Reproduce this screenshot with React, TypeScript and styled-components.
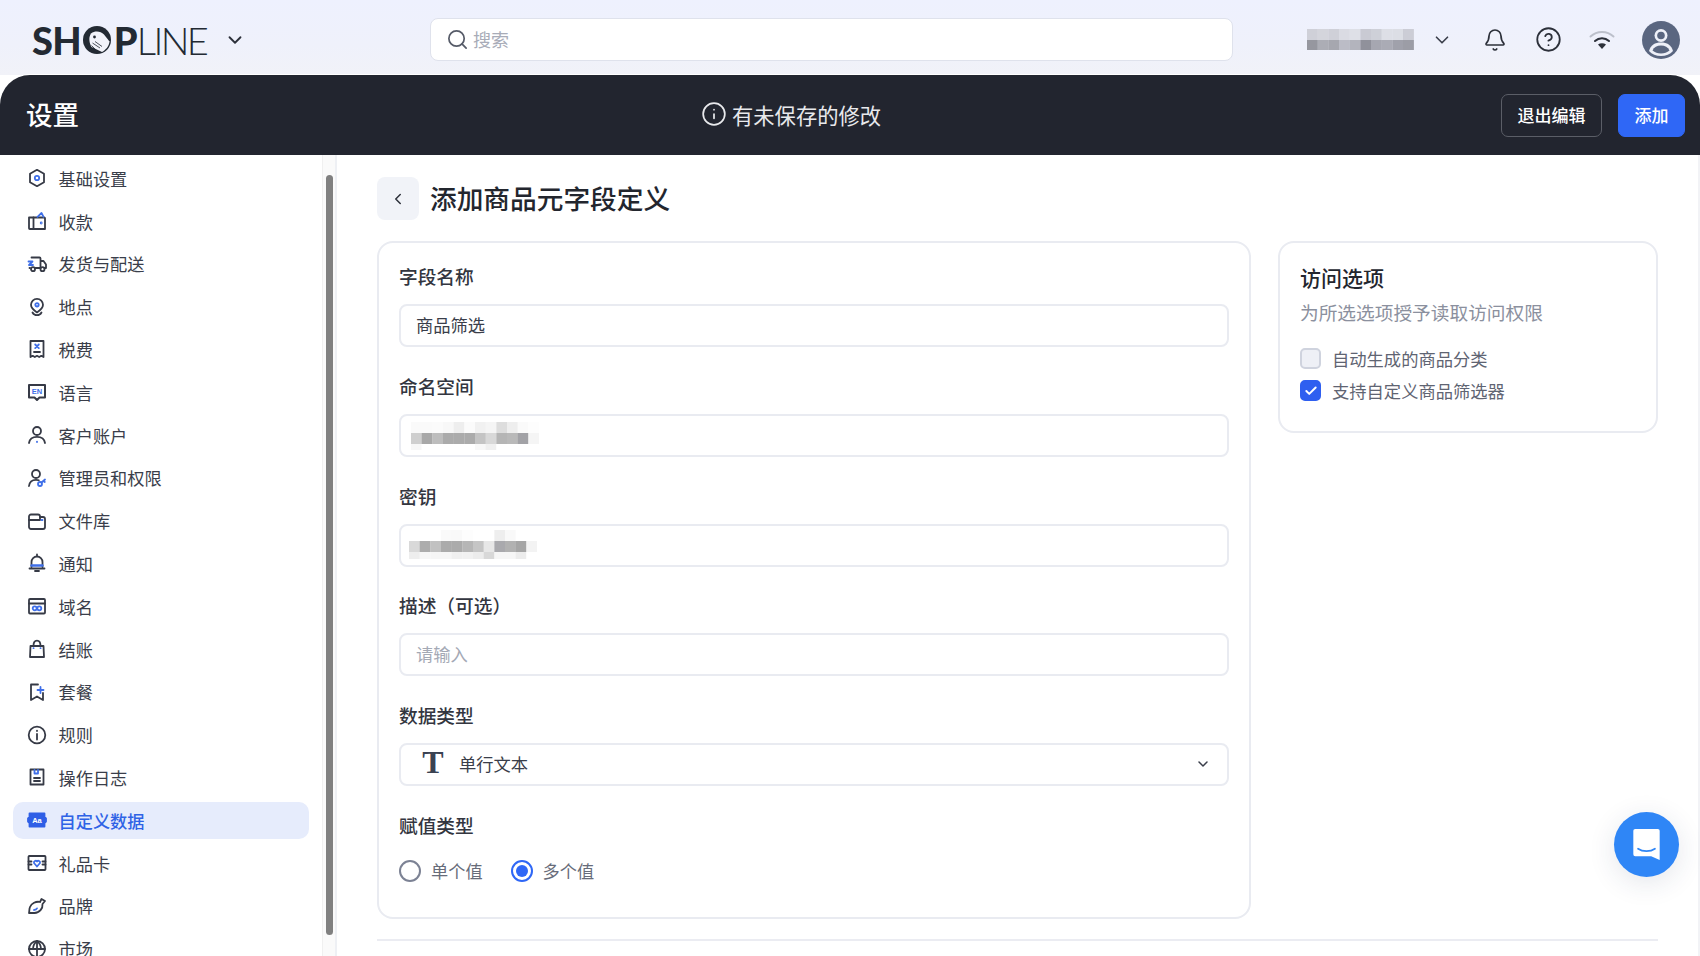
import React from "react";
import styled, { createGlobalStyle } from "styled-components";
import { Bell, Check, ChevronDown, ChevronLeft, CircleHelp, Info, Search } from "lucide-react";

const CJK = `"Noto Sans CJK SC", "Noto Sans", sans-serif`;
const INK = "#3a3e4a";
const BLUE = "#3f6fe8";

const Global = createGlobalStyle`
  html, body { margin: 0; height: 100%; background: #fff; overflow: hidden; }
  * { box-sizing: border-box; }
  body { font-family: ${CJK}; color: ${INK}; }
`;

const Page = styled.div`
  position: relative;
  width: 1700px;
  height: 956px;
  display: flex;
  flex-direction: column;
  overflow: hidden;
  background: #fff;
`;

const Top = styled.header`
  height: 75px;
  flex: none;
  display: flex;
  align-items: center;
  padding-top: 4px;
  background: linear-gradient(180deg, #eef1fe 0%, #eff1fb 60%, #f1f2f8 100%);
`;

const LogoWrap = styled.div`
  width: 430px;
  flex: none;
  padding-left: 32px;
  display: flex;
  align-items: center;
`;

const Logo = styled.div`
  display: flex;
  align-items: center;
  font-family: Lato, "Noto Sans", sans-serif;
  font-size: 38px;
  line-height: 1;
  color: #232a33;
  width: 192px;
`;

const LogoBold = styled.span`
  font-weight: 900;
  letter-spacing: -0.8px;
`;

const LogoThin = styled.span`
  font-weight: 300;
  letter-spacing: -2.6px;
`;

const LogoMark = styled.svg`
  width: 28px;
  height: 28px;
  margin: 0 3px 0 2px;
  flex: none;
`;

const SearchBox = styled.div`
  width: 803px;
  height: 43px;
  flex: none;
  display: flex;
  align-items: center;
  gap: 4px;
  padding: 0 0 1px 15px;
  background: #fff;
  border: 1px solid #dfe2ec;
  border-radius: 8px;
  color: #a8acb8;
  font-size: 18px;
`;

const SearchIcon = styled(Search)`
  margin-top: 1px;
`;

const TopRight = styled.div`
  display: flex;
  align-items: center;
  margin-left: 74px;
`;

const Account = styled.div`
  display: flex;
  align-items: center;
  width: 176px;
  gap: 17px;
  color: ${INK};
`;

const TopIcon = styled.div<{ $w: number; $ml?: number }>`
  width: ${(p) => p.$w}px;
  margin-left: ${(p) => p.$ml ?? 0}px;
  display: flex;
  justify-content: center;
  color: #2c303a;
`;

const Bar = styled.div`
  height: 80px;
  flex: none;
  display: flex;
  align-items: center;
  background: #22252f;
  border-radius: 30px 30px 0 0;
  box-shadow: 0 -1px 0 #fff;
  padding: 0 15px 0 26px;
  color: #fff;
`;

const BarTitle = styled.div`
  width: 675px;
  flex: none;
  font-size: 26.5px;
  font-weight: 500;
  padding-bottom: 3px;
`;

const Unsaved = styled.div`
  display: flex;
  align-items: center;
  gap: 5px;
  font-size: 21.3px;
  color: #e8e9ec;
  padding-bottom: 2px;
`;

const BarActions = styled.div`
  margin-left: auto;
  display: flex;
  gap: 16px;
`;

const BarButton = styled.button<{ $primary?: boolean }>`
  height: 43px;
  padding: 0 0 2px;
  width: ${(p) => (p.$primary ? 67 : 101)}px;
  border-radius: 7px;
  font: 500 17px ${CJK};
  color: #fff;
  background: ${(p) => (p.$primary ? "#2f67f6" : "transparent")};
  border: 1px solid ${(p) => (p.$primary ? "#2f67f6" : "#5b5e67")};
`;

const Body = styled.div`
  flex: 1;
  min-height: 0;
  display: flex;
`;

const Side = styled.aside`
  width: 337px;
  flex: none;
  display: flex;
  border-right: 2px solid #eef0f4;
  overflow: hidden;
`;

const Nav = styled.nav`
  width: 322px;
  flex: none;
  padding: 5px 13px 0;
  display: flex;
  flex-direction: column;
  gap: 5.8px;
`;

const NavItem = styled.div<{ $active?: boolean }>`
  height: 37px;
  flex: none;
  display: flex;
  align-items: center;
  gap: 11.5px;
  padding: 0 0 0.5px 14px;
  border-radius: 10px;
  font-size: 17.2px;
  color: ${(p) => (p.$active ? "#2f63e6" : INK)};
  background: ${(p) => (p.$active ? "#e6ecfc" : "transparent")};
  font-weight: ${(p) => (p.$active ? 500 : 400)};
`;

const Rail = styled.div`
  width: 13px;
  flex: none;
  padding: 20px 2px 0 3px;
  background: #fafafa;
  border-left: 1px solid #f0f0f0;
`;

const Thumb = styled.div`
  height: 760px;
  border-radius: 4px;
  background: #808080;
`;

const Main = styled.main`
  flex: 1;
  min-width: 0;
  padding: 22px 0 0 40px;
  display: flex;
  flex-direction: column;
  border-right: 2px solid #f2f3f6;
`;

const Head = styled.div`
  display: flex;
  align-items: center;
  gap: 11px;
  height: 43px;
  flex: none;
`;

const Back = styled.div`
  width: 42px;
  height: 43px;
  border-radius: 8px;
  background: #f1f3f8;
  display: flex;
  align-items: center;
  justify-content: center;
  color: #2c303a;
`;

const Title = styled.h1`
  margin: 0;
  padding-bottom: 2px;
  font-size: 26.7px;
  font-weight: 500;
  color: #23262e;
`;

const Columns = styled.div`
  margin-top: 21px;
  display: grid;
  grid-template-columns: 874px 380px;
  gap: 27px;
  align-items: start;
  flex: none;
`;

const Card = styled.section`
  border: 2px solid #e9ebf1;
  border-radius: 16px;
  background: #fff;
`;

const FormCard = styled(Card)`
  height: 678px;
  padding: 20px 20px 0;
  display: flex;
  flex-direction: column;
  gap: 25.8px;
`;

const Field = styled.div`
  display: flex;
  flex-direction: column;
  gap: 15px;
`;

const Label = styled.div`
  height: 26px;
  line-height: 26px;
  font-size: 18.7px;
  font-weight: 500;
  color: #33363f;
`;

const InputBox = styled.div<{ $muted?: boolean }>`
  height: 43px;
  display: flex;
  align-items: center;
  padding: 0 0 2px 15px;
  border: 2px solid #e9ebf1;
  border-radius: 8px;
  font-size: 17.3px;
  color: ${(p) => (p.$muted ? "#a4a9b5" : INK)};
`;

const SelectBox = styled(InputBox)`
  padding: 0 16px 2px 20px;
  gap: 14px;
`;

const SelectText = styled.span`
  flex: 1;
`;

const TypeGlyph = styled.span`
  font: 700 32px/1 "Liberation Serif", serif;
  color: #3a4252;
  width: 24px;
  text-align: center;
  margin-top: -3px;
`;

const MosaicSvg = styled.svg<{ $ml?: number; $mt?: number }>`
  display: block;
  flex: none;
  margin-left: ${(p) => p.$ml ?? 0}px;
  margin-top: ${(p) => p.$mt ?? 0}px;
  filter: blur(0.3px);
`;

const Radios = styled.div`
  height: 30px;
  margin-top: 3px;
  display: flex;
  align-items: center;
  gap: 28px;
`;

const RadioLabel = styled.div`
  display: flex;
  align-items: center;
  gap: 10px;
  font-size: 17.2px;
  color: #676c7a;
`;

const RadioDot = styled.span<{ $on?: boolean }>`
  width: 22px;
  height: 22px;
  border-radius: 50%;
  border: 2.5px solid ${(p) => (p.$on ? "#2f67f6" : "#7c8294")};
  display: flex;
  align-items: center;
  justify-content: center;
  &::after {
    content: "";
    width: 12px;
    height: 12px;
    border-radius: 50%;
    background: ${(p) => (p.$on ? "#2f67f6" : "transparent")};
  }
`;

const AccessCard = styled(Card)`
  height: 192px;
  padding: 19px 20px 0;
`;

const AccessTitle = styled.div`
  font-size: 21px;
  font-weight: 500;
  line-height: 30px;
  color: #23262e;
`;

const AccessSub = styled.div`
  margin-top: 5px;
  font-size: 18.7px;
  line-height: 30px;
  color: #8b909e;
`;

const Checks = styled.div`
  margin-top: 20px;
  display: flex;
  flex-direction: column;
  gap: 10.5px;
`;

const CheckRow = styled.div`
  display: flex;
  align-items: center;
  gap: 11px;
  font-size: 17.3px;
  color: #5f6472;
  height: 22px;
`;

const CheckBox = styled.span<{ $on?: boolean }>`
  width: 21px;
  height: 21px;
  border-radius: 5px;
  display: flex;
  align-items: center;
  justify-content: center;
  color: #fff;
  background: ${(p) => (p.$on ? "#2f5ff0" : "#eef0f6")};
  border: 2px solid ${(p) => (p.$on ? "#2f5ff0" : "#cfd3de")};
`;

const Divider = styled.div`
  width: 1281px;
  height: 2px;
  margin-top: 20px;
  flex: none;
  background: #ebecf2;
`;

const Chat = styled.div`
  position: absolute;
  left: 1614px;
  top: 811.5px;
  width: 65px;
  height: 65px;
  border-radius: 50%;
  background: #2f86f6;
  box-shadow: 0 6px 28px rgba(30, 50, 90, 0.12);
  display: flex;
  align-items: center;
  justify-content: center;
`;

const NavSvg = styled.svg`
  width: 20px;
  height: 20px;
  flex: none;
  fill: none;
  stroke: #363a46;
  stroke-width: 1.8;
  stroke-linecap: round;
  stroke-linejoin: round;
`;

const Accent = styled.g`
  stroke: ${BLUE};
`;

const IconLabel = styled.text`
  font: 700 7.5px "Liberation Sans", sans-serif;
  text-anchor: middle;
  stroke: none;
`;

type Row = string[];

function Mosaic({ rows, cell = 10.67, heights, ml, mt }: { rows: Row[]; cell?: number; heights: number[]; ml?: number; mt?: number }) {
  const w = rows[0].length * cell;
  const h = heights.reduce((a, b) => a + b, 0);
  let y = 0;
  return (
    <MosaicSvg width={w} height={h} viewBox={`0 0 ${w} ${h}`} $ml={ml} $mt={mt}>
      {rows.map((r, i) => {
        const top = y;
        y += heights[i];
        return r.map((c, j) => <rect key={`${i}-${j}`} x={j * cell} y={top} width={cell + 0.2} height={heights[i]} fill={`#${c}`} />);
      })}
    </MosaicSvg>
  );
}

const NS: Row[] = [
  ["fafafa", "fafafa", "fbfbfb", "f8f8f8", "eeeeee", "fbfbfb", "f1f1f1", "f5f5f5", "dddddd", "eeeeee", "fafafa", "fdfdfd"],
  ["cfcfcf", "a8a8a8", "bdbdbd", "ababab", "ababab", "ababab", "c4c4c4", "d8d8d8", "b5b5b5", "b9b9b9", "a2a2a6", "f5f5f5"],
  ["f7f7f7", "ffffff", "ffffff", "ffffff", "ffffff", "ffffff", "f8f8f8", "f0f0f0", "ffffff", "ffffff", "ffffff", "ffffff"],
];
const KEY: Row[] = [
  ["ffffff", "ffffff", "ffffff", "fafafa", "f9f9f9", "fdfdfd", "ffffff", "ffffff", "eeeeee", "f9f9f9", "ffffff", "ffffff"],
  ["d9d9d9", "acacac", "c1c1c1", "ababab", "ababab", "b6b6b6", "c5c5c5", "e7e7e7", "a9a9ad", "b1b1b1", "a5a5a5", "f3f3f3"],
  ["eeeeee", "f6f6f6", "f6f6f6", "f6f6f6", "f0f0f0", "f1f1f1", "ececec", "d8d8d8", "f6f6f6", "f6f6f6", "ececec", "ffffff"],
];
const ACC: Row[] = [
  ["cfd0d8", "d4d5dc", "cfd0d8", "dadbe3", "dee0e7", "c9cad3", "ced0d8", "dddfe6", "dcdee5", "cccdd6"],
  ["96979f", "acadb5", "a6a7af", "bbbcc6", "b3b4bd", "90919b", "a6a7b1", "aaabb5", "a0a1ab", "9c9da6"],
];

const icons: Record<string, React.ReactNode> = {
  hex: (<><path d="M10 1.800l7 4v8.400l-7 4-7-4V5.800z" /><Accent><circle cx="10" cy="10" r="2.200" /></Accent></>),
  wallet: (<><path d="M2 6.500h15.500a.8.8 0 0 1 .5.7V18H2.800a.8.8 0 0 1-.8-.8z" /><path d="M6.500 6.500V18" /><Accent><path d="M10.500 5.800L14.500 2l2 3.800" /><circle cx="14.200" cy="12" r=".5" /></Accent></>),
  truck: (<><path d="M4.500 3.500h8a1 1 0 0 1 1 1v9.500H8.500M13.500 7h3L19 10.500V14h-1.500" /><path d="M3 14H2.500" /><circle cx="6" cy="15.200" r="2" /><circle cx="15.500" cy="15.200" r="2" /><Accent><path d="M1.500 7.500h4L2 11h4" /></Accent></>),
  pin: (<><path d="M10 1.800a6 6 0 0 1 6 6c0 3-3 5.700-6 7.600-3-1.900-6-4.600-6-7.600a6 6 0 0 1 6-6z" /><path d="M5.500 15.500c1 1.800 2.500 2.700 4.500 2.700s3.500-.9 4.500-2.700" /><Accent><circle cx="10" cy="7.800" r="1.700" /></Accent></>),
  receipt: (<><path d="M3.500 2h13v16l-2.200-1.200-2.100 1.200-2.200-1.200-2.200 1.200-2.100-1.200-2.200 1.200z" /><Accent><path d="M8.200 5.500l3.600 3.600M11.800 5.500l-3.600 3.600" /></Accent><path d="M7 13h6" /></>),
  lang: (<><path d="M2 3h16v12.500h-5.500L10 18l-2.500-2.500H2z" strokeWidth="2" /><IconLabel x="10" y="12" fill={BLUE}>EN</IconLabel></>),
  person: (<><circle cx="10" cy="6" r="4" /><path d="M2 18c.6-4 3.600-6.200 8-6.200s7.400 2.200 8 6.200" /><Accent><path d="M10 16.600v.4" /></Accent></>),
  admin: (<><circle cx="9" cy="6" r="4" /><path d="M2 18c.5-4 3-6.200 7-6.200 1 0 2 .1 2.800.5" /><Accent><circle cx="13" cy="16" r="2" /><path d="M14.500 14.500l3.500-3M16.500 13l1.300 1" /></Accent></>),
  folder: (<><path d="M2 5.500a2 2 0 0 1 2-2h7a2 2 0 0 1 2 2V6h3a2 2 0 0 1 2 2v8a2 2 0 0 1-2 2H4a2 2 0 0 1-2-2z" /><path d="M2 9h11V6" /><Accent><path d="M14.500 9h1" /></Accent></>),
  bell: (<><path d="M10 1.500v1.600M4.500 14V9a5.500 5.500 0 0 1 11 0v5" /><path d="M2.500 15.500h15M8 18h4" /><Accent><path d="M4.500 12.500h11" strokeWidth="2.400" /></Accent></>),
  domain: (<><rect x="2" y="3" width="16" height="14.500" rx="1" /><path d="M2 7.500h16" /><Accent><circle cx="7.700" cy="12.300" r="2" /><circle cx="12.300" cy="12.300" r="2" /></Accent></>),
  bag: (<><path d="M3.500 7h13l.5 11H3z" /><path d="M6.500 7c0-3.500 1-5.300 3.500-5.300S13.500 3.500 13.500 7" /><Accent><path d="M6.500 9.200h.1M13.500 9.200h.1" /></Accent></>),
  plan: (<><path d="M16 11v7l-6-3.500L4 18V2.500h7" /><Accent><path d="M13.500 5v6M10.500 8h6" /></Accent></>),
  info: (<><circle cx="10" cy="10" r="8.300" /><path d="M10 9v5.500M10 5.600v.4" /></>),
  log: (<><path d="M3.500 2.500h13v15h-13z" /><path d="M7 11h6M7 14h6" /><Accent><path d="M7.500 3v3.500h3.500V3" /></Accent></>),
  data: (<><path d="M2.500 3.500h15V7l1.500 1.500v3L17.500 13v3.500h-15V13L1 11.500v-3L2.500 7z" fill="#2f5fe6" stroke="#2f5fe6" /><IconLabel x="10" y="12.500" fill="#fff">Aa</IconLabel></>),
  gift: (<><rect x="1.500" y="3" width="17" height="14" rx=".8" /><path d="M1.500 8.500h3M15.500 8.500h3M1.500 11.500h3M15.500 11.500h3" /><Accent><path d="M10 13.500L7 10a1.700 1.700 0 0 1 3-1.500 1.700 1.700 0 0 1 3 1.500z" /></Accent></>),
  brand: (<><path d="M13 6l1.500-3 3.500 2-2.500 3c.5 4.500-3 9-8 9H2c.5-1.500 0-3.500 1-6 1.500-3.500 6-6 10-5z" /><Accent><path d="M7 14c1.500 0 2.500-.6 3-1.600" /></Accent></>),
  globe: (<><circle cx="10" cy="10" r="8" /><path d="M2 10h16M10 2v16M10 2c-3 2.500-4 5-4 8M10 2c3 2.500 4 5 4 8" /></>),
};

const NAV: [string, string][] = [
  ["hex", "基础设置"], ["wallet", "收款"], ["truck", "发货与配送"], ["pin", "地点"], ["receipt", "税费"],
  ["lang", "语言"], ["person", "客户账户"], ["admin", "管理员和权限"], ["folder", "文件库"], ["bell", "通知"],
  ["domain", "域名"], ["bag", "结账"], ["plan", "套餐"], ["info", "规则"], ["log", "操作日志"],
  ["data", "自定义数据"], ["gift", "礼品卡"], ["brand", "品牌"], ["globe", "市场"],
];

export default function App() {
  return (
    <Page>
      <Global />
      <Top>
        <LogoWrap>
          <Logo>
            <LogoBold>SH</LogoBold>
            <LogoMark viewBox="0 0 28 28">
              <circle cx="14" cy="14" r="14" fill="#232a33" />
              <path d="M8 7.500c4-3 9.500-2.500 13 1l5.500 7c-.5 5-4 8.500-7.500 10.500L8.500 21C6 16.500 5.500 11 8 7.500z" fill="#f2f3fa" />
              <circle cx="11.500" cy="11" r="1.400" fill="#232a33" />
              <path d="M9.500 17l7.500 5M8.500 19.500l5 5M12 15.500l7 5" stroke="#232a33" strokeWidth=".8" />
            </LogoMark>
            <LogoBold>P</LogoBold>
            <LogoThin>LINE</LogoThin>
          </Logo>
          <ChevronDown size={22} strokeWidth={2} color="#2c303a" />
        </LogoWrap>
        <SearchBox>
          <SearchIcon size={23} color="#565b68" strokeWidth={1.8} />
          搜索
        </SearchBox>
        <TopRight>
          <Account>
            <Mosaic rows={ACC} heights={[11, 10]} />
            <ChevronDown size={22} strokeWidth={1.8} color="#3a3e4a" />
          </Account>
          <TopIcon $w={24}><Bell size={26} strokeWidth={1.7} /></TopIcon>
          <TopIcon $w={82}><CircleHelp size={27} strokeWidth={1.6} /></TopIcon>
          <TopIcon $w={26}>
            <svg width="26" height="22" viewBox="0 0 26 22" fill="none" strokeLinecap="round">
              <path d="M1.500 7.500C8 1.500 18 1.500 24.500 7.500" stroke="#bcc0cb" strokeWidth="2" />
              <path d="M6 12c4-3.700 10-3.700 14 0" stroke="#2c303a" strokeWidth="2" />
              <path d="M13 20l-4-4.500c2.300-1.700 5.700-1.700 8 0z" fill="#2c303a" />
            </svg>
          </TopIcon>
          <TopIcon $w={38} $ml={27}>
            <svg width="38" height="38" viewBox="0 0 38 38">
              <circle cx="19" cy="19" r="19" fill="#5a6680" />
              <circle cx="19" cy="14.500" r="6.500" fill="#eef0f8" />
              <path d="M7 30c1.500-6 6-8.500 12-8.500S29.500 24 31 30c-3 3.500-7 5-12 5S10 33.500 7 30z" fill="#eef0f8" />
              <circle cx="19" cy="14.500" r="3.800" fill="#5a6680" />
              <path d="M10.500 29.500c1.500-3.500 4.500-5 8.500-5s7 1.500 8.500 5c-2.500 2-5 3-8.500 3s-6-1-8.500-3z" fill="#5a6680" />
            </svg>
          </TopIcon>
        </TopRight>
      </Top>

      <Bar>
        <BarTitle>设置</BarTitle>
        <Unsaved><Info size={26} strokeWidth={1.6} />有未保存的修改</Unsaved>
        <BarActions>
          <BarButton>退出编辑</BarButton>
          <BarButton $primary>添加</BarButton>
        </BarActions>
      </Bar>

      <Body>
        <Side>
          <Nav>
            {NAV.map(([icon, label]) => (
              <NavItem key={label} $active={icon === "data"}>
                <NavSvg viewBox="0 0 20 20">{icons[icon]}</NavSvg>
                {label}
              </NavItem>
            ))}
          </Nav>
          <Rail><Thumb /></Rail>
        </Side>
        <Main>
          <Head>
            <Back><ChevronLeft size={18} strokeWidth={2} /></Back>
            <Title>添加商品元字段定义</Title>
          </Head>
          <Columns>
            <FormCard>
              <Field>
                <Label>字段名称</Label>
                <InputBox>商品筛选</InputBox>
              </Field>
              <Field>
                <Label>命名空间</Label>
                <InputBox><Mosaic rows={NS} heights={[11, 11, 6]} ml={-5} mt={3} /></InputBox>
              </Field>
              <Field>
                <Label>密钥</Label>
                <InputBox><Mosaic rows={KEY} heights={[11, 11, 7]} ml={-7} mt={1} /></InputBox>
              </Field>
              <Field>
                <Label>描述（可选）</Label>
                <InputBox $muted>请输入</InputBox>
              </Field>
              <Field>
                <Label>数据类型</Label>
                <SelectBox>
                  <TypeGlyph>T</TypeGlyph>
                  <SelectText>单行文本</SelectText>
                  <ChevronDown size={16} strokeWidth={2.2} color="#3a3e4a" />
                </SelectBox>
              </Field>
              <Field>
                <Label>赋值类型</Label>
                <Radios>
                  <RadioLabel><RadioDot />单个值</RadioLabel>
                  <RadioLabel><RadioDot $on />多个值</RadioLabel>
                </Radios>
              </Field>
            </FormCard>
            <AccessCard>
              <AccessTitle>访问选项</AccessTitle>
              <AccessSub>为所选选项授予读取访问权限</AccessSub>
              <Checks>
                <CheckRow><CheckBox />自动生成的商品分类</CheckRow>
                <CheckRow><CheckBox $on><Check size={14} strokeWidth={3.4} /></CheckBox>支持自定义商品筛选器</CheckRow>
              </Checks>
            </AccessCard>
          </Columns>
          <Divider />
        </Main>
      </Body>

      <Chat>
        <svg width="29" height="32" viewBox="0 0 30 34">
          <path d="M3 1h24a2 2 0 0 1 2 2v31l-9-4H3a2 2 0 0 1-2-2V3a2 2 0 0 1 2-2z" fill="#fff" />
          <path d="M6 22c5 3.500 13 3.500 18 0" stroke="#2f86f6" strokeWidth="1.800" fill="none" strokeLinecap="round" />
        </svg>
      </Chat>
    </Page>
  );
}
